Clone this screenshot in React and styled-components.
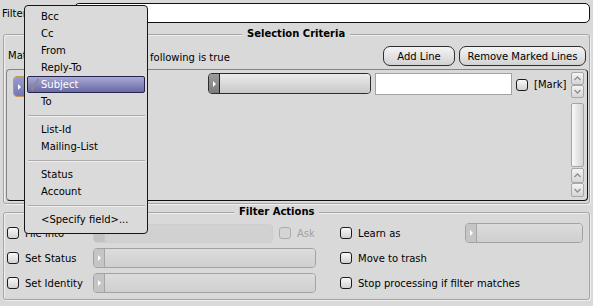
import React from 'react';
import styled, { createGlobalStyle, css } from 'styled-components';

const GlobalStyle = createGlobalStyle`
  html, body {
    margin: 0;
    padding: 0;
    background: #d9d9d9;
  }
  body {
    font-family: 'DejaVu Sans', Verdana, sans-serif;
    font-size: 10px;
    color: #000;
  }
`;

const Page = styled.div`
  position: relative;
  width: 593px;
  height: 306px;
  box-sizing: border-box;
  padding: 3px 3px 0 3px;
  background: #d9d9d9;
  display: flex;
  flex-direction: column;
  overflow: hidden;
`;

// top "Filter name" row
const FilterRow = styled.div`
  display: flex;
  align-items: center;
  height: 20px;
  margin-left: -1px;
`;
const FilterLabel = styled.span`
  width: 72px;
`;
const FilterInput = styled.div`
  flex: 1;
  height: 20px;
  box-sizing: border-box;
  border: 1px solid #111;
  border-radius: 5px;
  background: #fff;
`;

// framed groups
const Group = styled.fieldset`
  margin: ${(p) => p.$top}px 0 0 0;
  padding: 0;
  min-width: 0;
  border: 1px solid #a4a4a4;
  border-radius: 3px;
  box-shadow: 1px 1px 0 #f0f0f0, inset 1px 1px 0 #f0f0f0;
`;
const Legend = styled.legend`
  margin-left: ${(p) => p.$offset}px;
  padding: 0 5px;
  font-weight: bold;
  line-height: 12px;
  background: #d9d9d9;
`;

const CriteriaBody = styled.div`
  display: flex;
  flex-direction: column;
  padding: 6px 1px 2px 2px;
`;
const ToolRow = styled.div`
  display: flex;
  align-items: center;
  height: 20px;
`;
const MatchText = styled.span`
  margin-left: 2px;
  flex: 1;
  white-space: nowrap;
  & > span {
    display: inline-block;
    width: 142px;
    overflow: hidden;
  }
`;
const PushButton = styled.button`
  width: ${(p) => p.$w}px;
  height: 20px;
  padding: 0;
  margin: 0 ${(p) => p.$right || 0}px 0 4px;
  font: inherit;
  color: #000;
  border: 1px solid #2e2e2e;
  border-radius: 7px;
  background: linear-gradient(#f4f4f4, #d2d2d2);
`;

const ListBox = styled.div`
  margin-top: 3px;
  height: 132px;
  box-sizing: border-box;
  border: 1px solid;
  border-color: #858585 #111 #111 #858585;
  border-radius: 4px;
  display: flex;
`;
const ListRows = styled.div`
  flex: 1;
  padding: 3px 0 0 6px;
`;
const CriteriaRow = styled.div`
  display: flex;
  align-items: flex-start;
  height: 24px;
`;
const TextField = styled.div`
  width: ${(p) => p.$w}px;
  height: 22px;
  margin-left: 4px;
  box-sizing: border-box;
  border: 1px solid #a2a2a2;
  background: #fff;
`;
const MarkLabel = styled.span`
  margin-left: 6px;
  line-height: 23px;
`;

const ScrollBar = styled.div`
  width: 13px;
  margin: 2px 3px 3px 0;
  display: flex;
  flex-direction: column;
`;
const ScrollBtn = styled.div`
  height: ${(p) => p.$h}px;
  box-sizing: border-box;
  border: 1px solid #a8a8a8;
  border-radius: 2px;
  background: linear-gradient(#f4f4f4, #d6d6d6);
  display: flex;
  align-items: center;
  justify-content: center;
`;
const ScrollTrough = styled.div`
  flex: 1;
  padding: 5px 0 1px;
  display: flex;
`;
const ScrollThumb = styled.div`
  flex: 1;
  border: 1px solid #a4a4a4;
  border-radius: 2px;
  background: linear-gradient(90deg, #fafafa, #d2d2d2);
`;

// combo boxes in their different states
const comboLook = {
  active: {
    border: '#2c2c2c',
    cap: 'linear-gradient(#9c9c9c, #7c7c7c)',
    capLine: '#1e1e1e',
    body: 'linear-gradient(#ececec, #c8c8c8)',
    arrow: '#fff',
  },
  normal: {
    border: '#a2a2a2',
    cap: '#c5c5c5',
    capLine: '#a6a6a6',
    body: 'linear-gradient(#dcdcdc, #cfcfcf)',
    arrow: '#fff',
  },
  faded: {
    border: '#cdcdcd',
    cap: '#c2c2c2',
    capLine: '#c6c6c6',
    body: '#d1d1d1',
    arrow: 'transparent',
  },
  open: {
    border: '#c49650',
    cap: 'linear-gradient(#9a9ad2, #7676b4)',
    capLine: '#7a7ab0',
    body: 'linear-gradient(#9a9ad2, #7676b4)',
    arrow: '#fff',
  },
};

const ComboBox = styled.div`
  display: flex;
  box-sizing: border-box;
  width: ${(p) => p.$w}px;
  height: ${(p) => p.$h || 20}px;
  margin-top: ${(p) => p.$mt || 0}px;
  margin-left: ${(p) => p.$ml || 0}px;
  border: 1px solid ${(p) => comboLook[p.$look].border};
  border-radius: 4px;
  overflow: hidden;
  flex-shrink: 0;
`;
const ComboCap = styled.div`
  width: 10px;
  display: flex;
  align-items: center;
  justify-content: center;
  background: ${(p) => comboLook[p.$look].cap};
  border-right: 1px solid ${(p) => comboLook[p.$look].capLine};
`;
const ComboArrow = styled.span`
  width: 0;
  height: 0;
  border-left: 3px solid ${(p) => comboLook[p.$look].arrow};
  border-top: 3px solid transparent;
  border-bottom: 3px solid transparent;
`;
const ComboBody = styled.div`
  flex: 1;
  background: ${(p) => comboLook[p.$look].body};
`;

const Combo = ({ look = 'normal', w, h, mt, ml }) => (
  <ComboBox $look={look} $w={w} $h={h} $mt={mt} $ml={ml}>
    <ComboCap $look={look}>
      <ComboArrow $look={look} />
    </ComboCap>
    <ComboBody $look={look} />
  </ComboBox>
);

const CheckBox = styled.span`
  display: inline-block;
  width: 12px;
  height: 12px;
  box-sizing: border-box;
  margin-top: ${(p) => p.$mt || 0}px;
  margin-left: ${(p) => p.$ml || 0}px;
  border: 1px solid ${(p) => (p.$disabled ? '#acacac' : '#1c1c1c')};
  border-radius: 3px;
  background: ${(p) =>
    p.$disabled ? '#d5d5d5' : 'linear-gradient(#f8f8f8, #d2d2d2)'};
  flex-shrink: 0;
`;

// filter actions
const ActionsGrid = styled.div`
  display: grid;
  grid-template-columns: 12px 74px 223px 24px 12px 113px 118px;
  grid-auto-rows: 20px;
  row-gap: 5px;
  align-items: center;
  padding: 5px 0 6px 3px;
`;
const ActionLabel = styled.span`
  padding-left: 6px;
  white-space: nowrap;
  color: ${(p) => (p.$disabled ? '#a2a2a2' : '#000')};
`;
const Cell = styled.div`
  display: flex;
  align-items: center;
  grid-column: ${(p) => p.$col};
`;

// popup menu over the field combo
const Menu = styled.div`
  position: absolute;
  left: 24px;
  top: 5px;
  width: 124px;
  box-sizing: border-box;
  padding: 2px 2px 5px 2px;
  border: 1px solid #161616;
  border-radius: 4px;
  background: #dadada;
`;
const MenuItem = styled.div`
  display: flex;
  align-items: center;
  height: 17px;
  box-sizing: border-box;
  white-space: nowrap;
  ${(p) =>
    p.$active &&
    css`
      border: 1px solid #24244c;
      border-radius: 2px;
      background: linear-gradient(#a8a8d8, #6a6aa4);
      color: #fff;
    `}
`;
const CheckSlot = styled.span`
  width: ${(p) => (p.$active ? 13 : 14)}px;
  display: flex;
  align-items: center;
`;
const MenuSep = styled.div`
  height: 11px;
  box-sizing: border-box;
  padding: 5px 0 0 1px;
  &::before {
    content: '';
    display: block;
    border-top: 1px solid #acacac;
    border-bottom: 1px solid #efefef;
  }
`;

const GROUPS = [
  ['Bcc', 'Cc', 'From', 'Reply-To', 'Subject', 'To'],
  ['List-Id', 'Mailing-List'],
  ['Status', 'Account'],
  ['<Specify field>...'],
];

const Chevron = ({ up }) => (
  <svg width="7" height="5" viewBox="0 0 7 5">
    <polyline
      points={up ? '0.5,4 3.5,1 6.5,4' : '0.5,1 3.5,4 6.5,1'}
      fill="none"
      stroke="#8e8e8e"
      strokeWidth="1.3"
    />
  </svg>
);

const App = () => (
  <Page>
    <GlobalStyle />
    <FilterRow>
      <FilterLabel>Filter name</FilterLabel>
      <FilterInput />
    </FilterRow>

    <Group $top={5}>
      <Legend $offset={238}>Selection Criteria</Legend>
      <CriteriaBody>
        <ToolRow>
          <MatchText>
            <span>Match when any of the</span>following is true
          </MatchText>
          <PushButton $w={72}>Add Line</PushButton>
          <PushButton $w={127} $right={2}>
            Remove Marked Lines
          </PushButton>
        </ToolRow>
        <ListBox>
          <ListRows>
            <CriteriaRow>
              <Combo look="open" w={127} h={21} mt={3} />
              <Combo look="active" w={163} h={21} ml={68} />
              <TextField $w={137} />
              <CheckBox $ml={4} $mt={6} />
              <MarkLabel>[Mark]</MarkLabel>
            </CriteriaRow>
          </ListRows>
          <ScrollBar>
            <ScrollBtn $h={13}>
              <Chevron up />
            </ScrollBtn>
            <ScrollBtn $h={13}>
              <Chevron />
            </ScrollBtn>
            <ScrollTrough>
              <ScrollThumb />
            </ScrollTrough>
            <ScrollBtn $h={15}>
              <Chevron up />
            </ScrollBtn>
            <ScrollBtn $h={14}>
              <Chevron />
            </ScrollBtn>
          </ScrollBar>
        </ListBox>
      </CriteriaBody>
    </Group>

    <Group $top={2}>
      <Legend $offset={230}>Filter Actions</Legend>
      <ActionsGrid>
        <CheckBox />
        <ActionLabel>File into</ActionLabel>
        <Cell $col="3">
          <Combo look="faded" w={180} h={19} />
          <CheckBox $disabled $ml={6} />
          <ActionLabel $disabled>Ask</ActionLabel>
        </Cell>
        <Cell $col="5">
          <CheckBox />
        </Cell>
        <ActionLabel>Learn as</ActionLabel>
        <Combo w={118} />

        <CheckBox />
        <ActionLabel>Set Status</ActionLabel>
        <Combo w={223} />
        <Cell $col="5">
          <CheckBox />
        </Cell>
        <Cell $col="6 / span 2">
          <ActionLabel>Move to trash</ActionLabel>
        </Cell>

        <CheckBox />
        <ActionLabel>Set Identity</ActionLabel>
        <Combo w={223} />
        <Cell $col="5">
          <CheckBox />
        </Cell>
        <Cell $col="6 / span 2">
          <ActionLabel>Stop processing if filter matches</ActionLabel>
        </Cell>
      </ActionsGrid>
    </Group>

    <Menu>
      {GROUPS.map((items, gi) => (
        <React.Fragment key={gi}>
          {gi > 0 && <MenuSep />}
          {items.map((name) => {
            const active = name === 'Subject';
            return (
              <MenuItem key={name} $active={active}>
                <CheckSlot $active={active}>
                  {active && (
                    <svg width="12" height="13" viewBox="0 0 12 13">
                      <polyline
                        points="1.5,7 4.5,11.5 10.5,1"
                        fill="none"
                        stroke="#8a8a8a"
                        strokeWidth="1.8"
                      />
                    </svg>
                  )}
                </CheckSlot>
                {name}
              </MenuItem>
            );
          })}
        </React.Fragment>
      ))}
    </Menu>
  </Page>
);

export default App;
